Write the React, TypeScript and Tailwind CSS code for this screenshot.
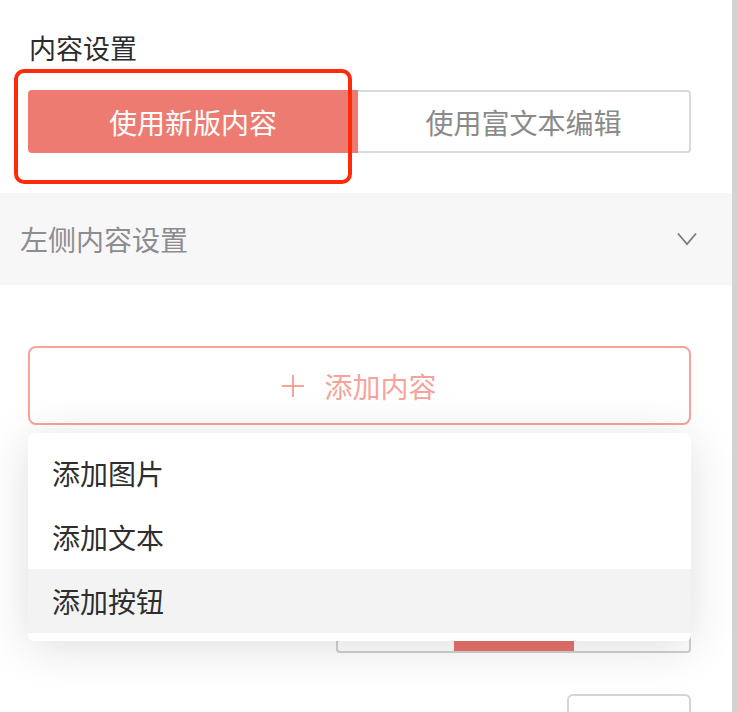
import React from 'react';

const font = { fontFamily: '"Noto Sans CJK SC", "Noto Sans", sans-serif' };

const menuItems = [
    { label: '添加图片', active: false },
    { label: '添加文本', active: false },
    { label: '添加按钮', active: true },
];

const App: React.FC = () => {
    return (
        <div className="flex w-[738px] h-[712px] overflow-hidden bg-white" style={font}>
            <div className="relative flex-1 flex flex-col">
                {/* Title */}
                <div className="shrink-0 pt-[28px] pl-[29px] text-[27px] leading-[40px] text-[#2b2b2b]">内容设置</div>

                {/* Mode switch */}
                <div className="shrink-0 mt-[22px] ml-[28px] mr-[41px] h-[63px] flex text-[28px]">
                    <div className="w-[330px] flex items-center justify-center rounded-l-[4px] bg-[#ee7b72] text-white">
                        使用新版内容
                    </div>
                    <div className="flex-1 flex items-center justify-center rounded-r-[4px] border-2 border-l-0 border-[#d9d9d9] text-[#8a8a8a]">
                        使用富文本编辑
                    </div>
                </div>

                {/* Collapse header */}
                <div className="shrink-0 mt-[40px] h-[92px] flex items-center justify-between pl-[20px] pr-[35px] bg-[#f7f7f7]">
                    <span className="text-[28px] text-[#8c8c91]">左侧内容设置</span>
                    <svg width="20" height="14" viewBox="0 0 20 14" fill="none">
                        <path d="M1 1.5 L10 12 L19 1.5" stroke="#7b7b80" strokeWidth="1.8" />
                    </svg>
                </div>

                {/* Add content */}
                <div className="shrink-0 mt-[61px] ml-[28px] mr-[41px] h-[79px] flex items-center justify-center gap-[20px] rounded-[8px] border-2 border-[#f7a399] text-[28px] text-[#f7a399]">
                    <svg width="22" height="22" viewBox="0 0 22 22" fill="none">
                        <path d="M11 0 V22 M0 11 H22" stroke="#f7a399" strokeWidth="2" />
                    </svg>
                    <span>添加内容</span>
                </div>

                {/* Button style row (partly covered) */}
                <div className="shrink-0 mt-[165px] mr-[41px] flex justify-end">
                    <div className="w-[355px] h-[63px] flex rounded-[4px] border-2 border-[#d0d0d0] overflow-hidden">
                        <div className="w-[116px]" />
                        <div className="w-[120px] bg-[#e6736b]" />
                        <div className="flex-1" />
                    </div>
                </div>

                <div className="shrink-0 mt-[41px] mr-[41px] flex justify-end">
                    <div className="w-[124px] h-[60px] rounded-[6px] border-2 border-[#d4d4d4]" />
                </div>

                {/* Dropdown */}
                <div className="absolute left-[28px] top-[433px] w-[663px] py-[8px] rounded-[6px] bg-white shadow-[0_6px_48px_rgba(0,0,0,0.13)]">
                    {menuItems.map((item) => (
                        <div
                            key={item.label}
                            className={`h-[64px] flex items-center pl-[24px] text-[28px] text-[#2e2e2e] ${item.active ? 'bg-[#f3f3f3]' : ''}`}
                        >
                            {item.label}
                        </div>
                    ))}
                </div>

                {/* Highlight */}
                <div className="absolute left-[14px] top-[69px] w-[338px] h-[115px] rounded-[10px] border-[4px] border-[#ff2a0a]" />
            </div>

            {/* Scrollbar track */}
            <div className="w-[6px] bg-[#d3d3d3]" />
        </div>
    );
};

export default App;
